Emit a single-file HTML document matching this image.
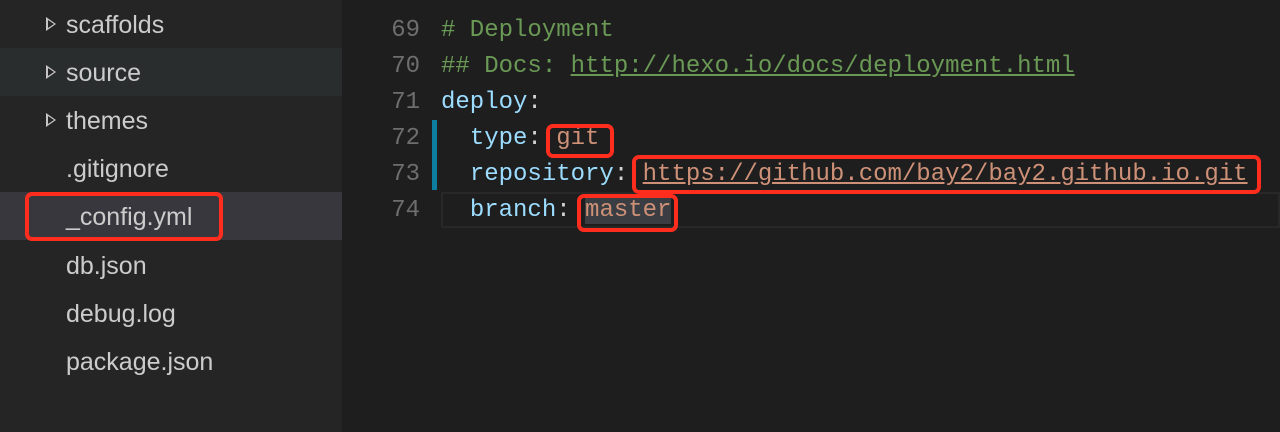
<!DOCTYPE html>
<html><head><style>
body{margin:0;width:1280px;height:432px;background:#1e1e1e;overflow:hidden;position:relative;font-family:"Liberation Sans",sans-serif}
.side{position:absolute;left:0;top:0;width:342px;height:432px;background:#252526}
.row{position:absolute;left:0;width:342px;height:48px;line-height:48px;color:#cccccc;font-size:25px}
.row span{position:absolute;left:66px;top:1px}
.tri{position:absolute;left:46px;top:17px;width:0;height:0;border-left:10px solid #c5c5c5;border-top:7px solid transparent;border-bottom:7px solid transparent}
.tri:after{content:"";position:absolute;left:-8.5px;top:-4px;border-left:6px solid #252526;border-top:4px solid transparent;border-bottom:4px solid transparent}
.code{position:absolute;font-family:"Liberation Mono",monospace;font-size:24px;white-space:pre;line-height:36px}
.ln{position:absolute;left:380px;width:40px;text-align:right;color:#6e6e6e}
.c{color:#6a9955}.k{color:#9cdcfe}.s{color:#ce9178}.p{color:#d4d4d4}
.box{position:absolute;border:4px solid #ff2d1e;border-radius:7px;box-sizing:border-box}
</style></head><body>
<div class="side">
<div class="row" style="top:0"><div class="tri"></div><span>scaffolds</span></div>
<div class="row" style="top:48px;background:#2a2d2e"><div class="tri"></div><span>source</span></div>
<div class="row" style="top:96px"><div class="tri"></div><span>themes</span></div>
<div class="row" style="top:144px"><span>.gitignore</span></div>
<div class="row" style="top:192px;background:#37373d"><span>_config.yml</span></div>
<div class="row" style="top:241px"><span>db.json</span></div>
<div class="row" style="top:289px"><span>debug.log</span></div>
<div class="row" style="top:337px"><span>package.json</span></div>
</div>
<div style="position:absolute;left:441px;top:192px;width:839px;height:36px;border:2px solid #282828;box-sizing:border-box"></div>
<div style="position:absolute;left:432px;top:120px;width:5px;height:70px;background:#0e7ea0"></div>
<div class="code ln" style="top:-23px">68</div>
<div class="code ln" style="top:13px">69</div>
<div class="code ln" style="top:49px">70</div>
<div class="code ln" style="top:85px">71</div>
<div class="code ln" style="top:121px">72</div>
<div class="code ln" style="top:157px">73</div>
<div class="code ln" style="top:193px">74</div>
<div class="code" style="left:441px;top:13px"><span class="c"># Deployment</span></div>
<div class="code" style="left:441px;top:49px"><span class="c">## Docs: <u>http://hexo.io/docs/deployment.html</u></span></div>
<div class="code" style="left:441px;top:85px"><span class="k">deploy</span><span class="p">:</span></div>
<div class="code" style="left:441px;top:121px">  <span class="k">type</span><span class="p">:</span> <span class="s">git</span></div>
<div class="code" style="left:441px;top:157px">  <span class="k">repository</span><span class="p">:</span> <span class="s"><u>https://github.com/bay2/bay2.github.io.git</u></span></div>
<div class="code" style="left:441px;top:193px">  <span class="k">branch</span><span class="p">:</span> <span class="s" style="background:#3a3d41">master</span></div>
<div class="box" style="left:546px;top:124px;width:68px;height:34px"></div>
<div class="box" style="left:632px;top:155px;width:629px;height:39px"></div>
<div class="box" style="left:577px;top:194px;width:101px;height:38px"></div>
<div class="box" style="left:25px;top:192px;width:198px;height:49px"></div>
</body></html>
